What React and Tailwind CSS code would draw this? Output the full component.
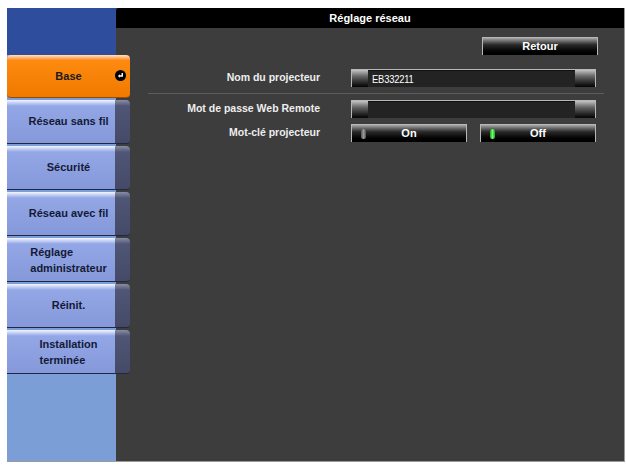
import React from 'react';

const font = { fontFamily: '"Liberation Sans", Arial, sans-serif' };

const menu = [
  { label: 'Base', active: true },
  { label: 'Réseau sans fil' },
  { label: 'Sécurité' },
  { label: 'Réseau avec fil' },
  { label: ['Réglage', 'administrateur'] },
  { label: 'Réinit.' },
  { label: ['Installation', 'terminée'] },
];

const MenuLabel = ({ label }) =>
  Array.isArray(label) ? (
    <span className="inline-block text-left leading-[16px]">
      {label[0]}
      <br />
      {label[1]}
    </span>
  ) : (
    <span className="whitespace-nowrap">{label}</span>
  );

const MenuButton = ({ item }) => {
  if (item.active) {
    return (
      <div className="relative flex h-[43px] w-[123px] items-center justify-center rounded-[4px] border-b border-[#9a4a00] bg-gradient-to-b from-[#ffe2b8] via-[#ff8a10] via-[12%] to-[#f07a00] text-[11px] font-bold text-[#1a1a1a]">
        <MenuLabel label={item.label} />
        <span className="absolute right-[4px] top-[15px] flex h-[11px] w-[11px] items-center justify-center rounded-full bg-black">
          <svg width="7" height="7" viewBox="0 0 8 8">
            <path d="M6 1v3.5H2.5" fill="none" stroke="#fff" strokeWidth="1.6" />
            <path d="M1 4.5l2.2-2v4z" fill="#fff" />
          </svg>
        </span>
      </div>
    );
  }
  return (
    <div className="relative flex h-[44px] w-[123px] overflow-hidden rounded-r-[4px] border-b border-[#1f2747]">
      <div className="w-[108px] bg-gradient-to-b from-[#f4f6ff] via-[#93a6e6] via-[14%] to-[#8599da]" />
      <div className="flex-1 bg-gradient-to-b from-[#8a8fa6] via-[#4f5676] via-[14%] to-[#444a66]" />
      <div className="absolute inset-0 flex items-center justify-center text-[11px] font-bold text-[#141a36]">
        <MenuLabel label={item.label} />
      </div>
    </div>
  );
};

const Field = ({ value }) => (
  <div className="flex h-[18px] w-[245px] border-l border-r border-t border-[#b8b8b8] bg-black">
    <div className="w-[16px] bg-gradient-to-b from-[#c4c4c4] via-[#6a6a6a] via-[35%] to-[#050505]" />
    <div className="flex flex-1 items-center border-t border-[#111] bg-[#232323] pl-[4px] text-[11px] text-white">
      <span className="scale-x-[0.85] origin-left tracking-[-0.2px]">{value}</span>
    </div>
    <div className="w-[20px] bg-gradient-to-b from-[#c4c4c4] via-[#6a6a6a] via-[35%] to-[#050505]" />
  </div>
);

const Switch = ({ label, on }) => (
  <div className="relative flex h-[18px] w-[116px] items-center justify-center border-l border-r border-t border-[#b8b8b8] bg-gradient-to-b from-[#a8a8a8] via-[#2a2a2a] via-[40%] to-black text-[11px] font-bold text-white">
    <span
      className={
        on
          ? 'absolute left-[9px] top-[4px] h-[10px] w-[5px] rounded-full bg-gradient-to-r from-[#1fa01f] via-[#6cff6c] to-[#1fa01f]'
          : 'absolute left-[9px] top-[4px] h-[10px] w-[5px] rounded-full bg-gradient-to-r from-[#555] via-[#9a9a9a] to-[#555]'
      }
    />
    {label}
  </div>
);

export default function App() {
  return (
    <div className="h-[465px] w-[626px] bg-white pl-[7px] pt-[8px]" style={font}>
      <div className="flex h-[454px] w-[618px] border-b border-r border-[#9a9a9a]">
        {/* left menu */}
        <div className="relative z-10 flex w-[109px] flex-col bg-[#7c9ed6]">
          <div className="h-[47px] bg-[#2f4d9d]" />
          <div className="flex flex-col gap-[2px]">
            {menu.map((item, i) => (
              <MenuButton key={i} item={item} />
            ))}
          </div>
        </div>

        {/* settings panel */}
        <div className="flex flex-1 flex-col bg-[#3d3d3d]">
          <div className="flex h-[20px] items-center justify-center rounded-tl-[3px] bg-black text-[11px] font-bold text-white">
            Réglage réseau
          </div>
          <div className="ml-[366px] mt-[9px] flex h-[18px] w-[116px] items-center justify-center border-l border-r border-t border-[#b8b8b8] bg-gradient-to-b from-[#a8a8a8] via-[#2a2a2a] via-[40%] to-black text-[11px] font-bold text-white">
            Retour
          </div>

          <div className="mt-[14px] flex items-center">
            <div className="w-[204px] text-right text-[10.5px] font-bold text-[#eeeeee]">Nom du projecteur</div>
            <div className="ml-[31px]">
              <Field value="EB332211" />
            </div>
          </div>

          <div className="ml-[32px] mt-[6px] h-px w-[456px] bg-[#5c5c5c]" />

          <div className="mt-[6px] flex items-center">
            <div className="w-[204px] text-right text-[10.5px] font-bold text-[#eeeeee]">Mot de passe Web Remote</div>
            <div className="ml-[31px]">
              <Field value="" />
            </div>
          </div>

          <div className="mt-[6px] flex items-center">
            <div className="w-[204px] text-right text-[10.5px] font-bold text-[#eeeeee]">Mot-clé projecteur</div>
            <div className="ml-[31px] flex gap-[13px]">
              <Switch label="On" />
              <Switch label="Off" on />
            </div>
          </div>
        </div>
      </div>
    </div>
  );
}
